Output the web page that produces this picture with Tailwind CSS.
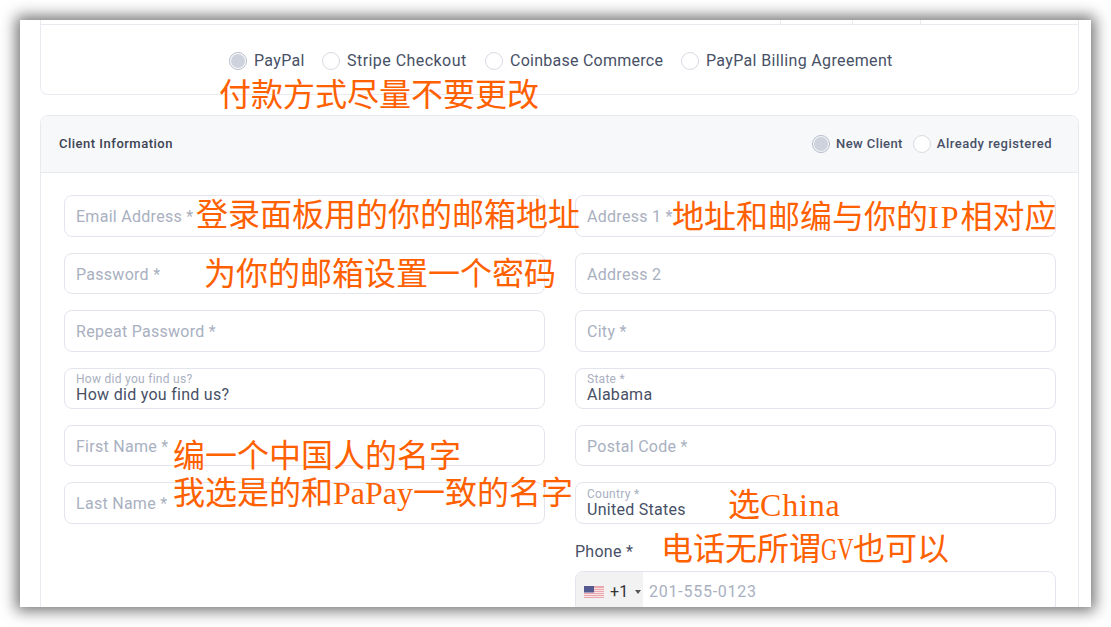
<!DOCTYPE html>
<html lang="zh">
<head>
  <meta charset="UTF-8" />
  <title>Client Information</title>
  <script src="https://cdn.jsdelivr.net/npm/@tailwindcss/browser@4"></script>
</head>
<body class="bg-white w-[1111px] h-[627px] overflow-hidden relative font-['Roboto','Noto_Sans_CJK_SC',sans-serif] text-[#475066]">
  <div class="absolute left-[20px] top-[20px] w-[1071px] h-[587px] bg-white overflow-hidden shadow-[0_0_14px_4px_rgba(0,0,0,0.55)]">
    <div class="ml-[20px] w-[1039px]">
      <!-- payment card -->
      <div class="h-[75px] border border-t-0 border-[#e8eaf0] rounded-b-[8px] relative">
        <div class="border-b border-[#e8eaf0] h-[5px] relative">
          <span class="absolute left-[739px] top-0 w-px h-[5px] bg-[#e8eaf0]"></span>
          <span class="absolute left-[811px] top-0 w-px h-[5px] bg-[#e8eaf0]"></span>
          <span class="absolute left-[879px] top-0 w-px h-[5px] bg-[#e8eaf0]"></span>
        </div>
        <div class="flex items-center pl-[188px] h-[30px] mt-[21px] text-[16px] tracking-[0.35px]">
          <label class="flex items-center gap-[7px] w-[93px]">
            <span class="shrink-0 w-[18px] h-[18px] rounded-full border border-[#b4bac8] flex items-center justify-center"><span class="w-[14px] h-[14px] rounded-full bg-[#cdd2dc]"></span></span>PayPal
          </label>
          <label class="flex items-center gap-[7px] w-[163px] tracking-[0.45px]"><span class="shrink-0 w-[18px] h-[18px] rounded-full border border-[#d8dbe3]"></span>Stripe Checkout</label>
          <label class="flex items-center gap-[7px] w-[196px] tracking-[0.25px]"><span class="shrink-0 w-[18px] h-[18px] rounded-full border border-[#d8dbe3]"></span>Coinbase Commerce</label>
          <label class="flex items-center gap-[7px]"><span class="shrink-0 w-[18px] h-[18px] rounded-full border border-[#d8dbe3]"></span>PayPal Billing Agreement</label>
        </div>
      </div>

      <!-- client information -->
      <div class="mt-[20px] h-[600px] border border-[#e8eaf0] rounded-t-[8px]">
        <div class="h-[57px] bg-[#f7f8fa] border-b border-[#e8eaf0] rounded-t-[8px] flex items-center justify-between pl-[18px] pr-[26px] text-[13px] font-medium tracking-[0.5px]">
          <h2 class="text-[#3b4252]">Client Information</h2>
          <div class="flex items-center gap-[10px]">
            <label class="flex items-center gap-[6px] tracking-[0.4px]">
              <span class="w-[18px] h-[18px] rounded-full border border-[#b4bac8] flex items-center justify-center"><span class="w-[14px] h-[14px] rounded-full bg-[#cdd2dc]"></span></span>New Client
            </label>
            <label class="flex items-center gap-[6px]"><span class="w-[18px] h-[18px] rounded-full bg-white border border-[#d8dbe3]"></span>Already registered</label>
          </div>
        </div>

        <div class="grid grid-cols-2 gap-x-[30px] pt-[22.4px] pl-[23px] pr-[22px] text-[16px] tracking-[0.28px]">
          <div class="flex flex-col gap-[15.9px]">
            <div class="h-[41.5px] border border-[#e2e5ec] rounded-[8px] flex items-center px-[11px] pt-[2px] text-[#a9b0bf]">Email Address *</div>
            <div class="h-[41.5px] border border-[#e2e5ec] rounded-[8px] flex items-center px-[11px] pt-[2px] text-[#a9b0bf]">Password *</div>
            <div class="h-[41.5px] border border-[#e2e5ec] rounded-[8px] flex items-center px-[11px] pt-[2px] text-[#a9b0bf]">Repeat Password *</div>
            <div class="h-[41.5px] border border-[#e2e5ec] rounded-[8px] flex flex-col justify-center px-[11px]">
              <span class="text-[12px] leading-[12px] mb-[1px] text-[#a9b0bf]">How did you find us?</span>
              <span class="leading-[18px]">How did you find us?</span>
            </div>
            <div class="h-[41.5px] border border-[#e2e5ec] rounded-[8px] flex items-center px-[11px] pt-[2px] text-[#a9b0bf]">First Name *</div>
            <div class="h-[41.5px] border border-[#e2e5ec] rounded-[8px] flex items-center px-[11px] pt-[2px] text-[#a9b0bf]">Last Name *</div>
          </div>
          <div class="flex flex-col gap-[15.9px]">
            <div class="h-[41.5px] border border-[#e2e5ec] rounded-[8px] flex items-center px-[11px] pt-[2px] text-[#a9b0bf]">Address 1 *</div>
            <div class="h-[41.5px] border border-[#e2e5ec] rounded-[8px] flex items-center px-[11px] pt-[2px] text-[#a9b0bf]">Address 2</div>
            <div class="h-[41.5px] border border-[#e2e5ec] rounded-[8px] flex items-center px-[11px] pt-[2px] text-[#a9b0bf]">City *</div>
            <div class="h-[41.5px] border border-[#e2e5ec] rounded-[8px] flex flex-col justify-center px-[11px]">
              <span class="text-[12px] leading-[12px] mb-[1px] text-[#a9b0bf]">State *</span>
              <span class="leading-[18px]">Alabama</span>
            </div>
            <div class="h-[41.5px] border border-[#e2e5ec] rounded-[8px] flex items-center px-[11px] pt-[2px] text-[#a9b0bf]">Postal Code *</div>
            <div class="h-[41.5px] border border-[#e2e5ec] rounded-[8px] flex flex-col justify-center px-[11px]">
              <span class="text-[12px] leading-[12px] mb-[1px] text-[#a9b0bf]">Country *</span>
              <span class="leading-[18px]">United States</span>
            </div>
            <div>
              <label class="block leading-[24px] mb-[7px]">Phone *</label>
              <div class="h-[42px] border border-[#e2e5ec] rounded-[8px] flex overflow-hidden">
                <div class="w-[67px] bg-[#f2f2f2] flex items-center pl-[8px] gap-[6px] text-[#333]">
                  <svg width="20" height="12" viewBox="0 0 20 12" class="shrink-0">
                    <rect width="20" height="12" fill="#e9a6ac"/>
                    <rect y="2" width="20" height="1" fill="#f8e6e7"/>
                    <rect y="4" width="20" height="1" fill="#f8e6e7"/>
                    <rect y="6" width="20" height="1" fill="#f8e6e7"/>
                    <rect y="8" width="20" height="1" fill="#f8e6e7"/>
                    <rect y="10" width="20" height="1" fill="#f8e6e7"/>
                    <rect width="10" height="6.5" fill="#54598f"/>
                  </svg>
                  <span>+1</span>
                  <span class="w-0 h-0 border-x-[3px] border-x-transparent border-t-[4px] border-t-[#555]"></span>
                </div>
                <div class="flex items-center pl-[6px] pt-[1px] text-[#a9b0bf] tracking-[0.75px]">201-555-0123</div>
              </div>
            </div>
          </div>
        </div>
      </div>
    </div>
  </div>

  <!-- hand-written notes laid over the screenshot -->
  <div class="absolute inset-0 text-[#ff6000] text-[32px] leading-[36px] font-['Liberation_Serif','Noto_Sans_CJK_SC',serif] whitespace-nowrap">
    <span class="absolute left-[219px] top-[77px]">付款方式尽量不要更改</span>
    <span class="absolute left-[196px] top-[197px]">登录面板用的你的邮箱地址</span>
    <span class="absolute left-[672px] top-[199px]">地址和邮编与你的<span class="tracking-[2px]">IP</span>相对应</span>
    <span class="absolute left-[204px] top-[256px]">为你的邮箱设置一个密码</span>
    <span class="absolute left-[173px] top-[438px]">编一个中国人的名字</span>
    <span class="absolute left-[173px] top-[475px]">我选是的和PaPay一致的名字</span>
    <span class="absolute left-[728px] top-[487px]">选<span class="tracking-[0.8px]">China</span></span>
    <span class="absolute left-[661px] top-[531px]">电话无所谓<span class="inline-block w-[32px] origin-left scale-x-[0.7]">GV</span>也可以</span>
  </div>
</body>
</html>
